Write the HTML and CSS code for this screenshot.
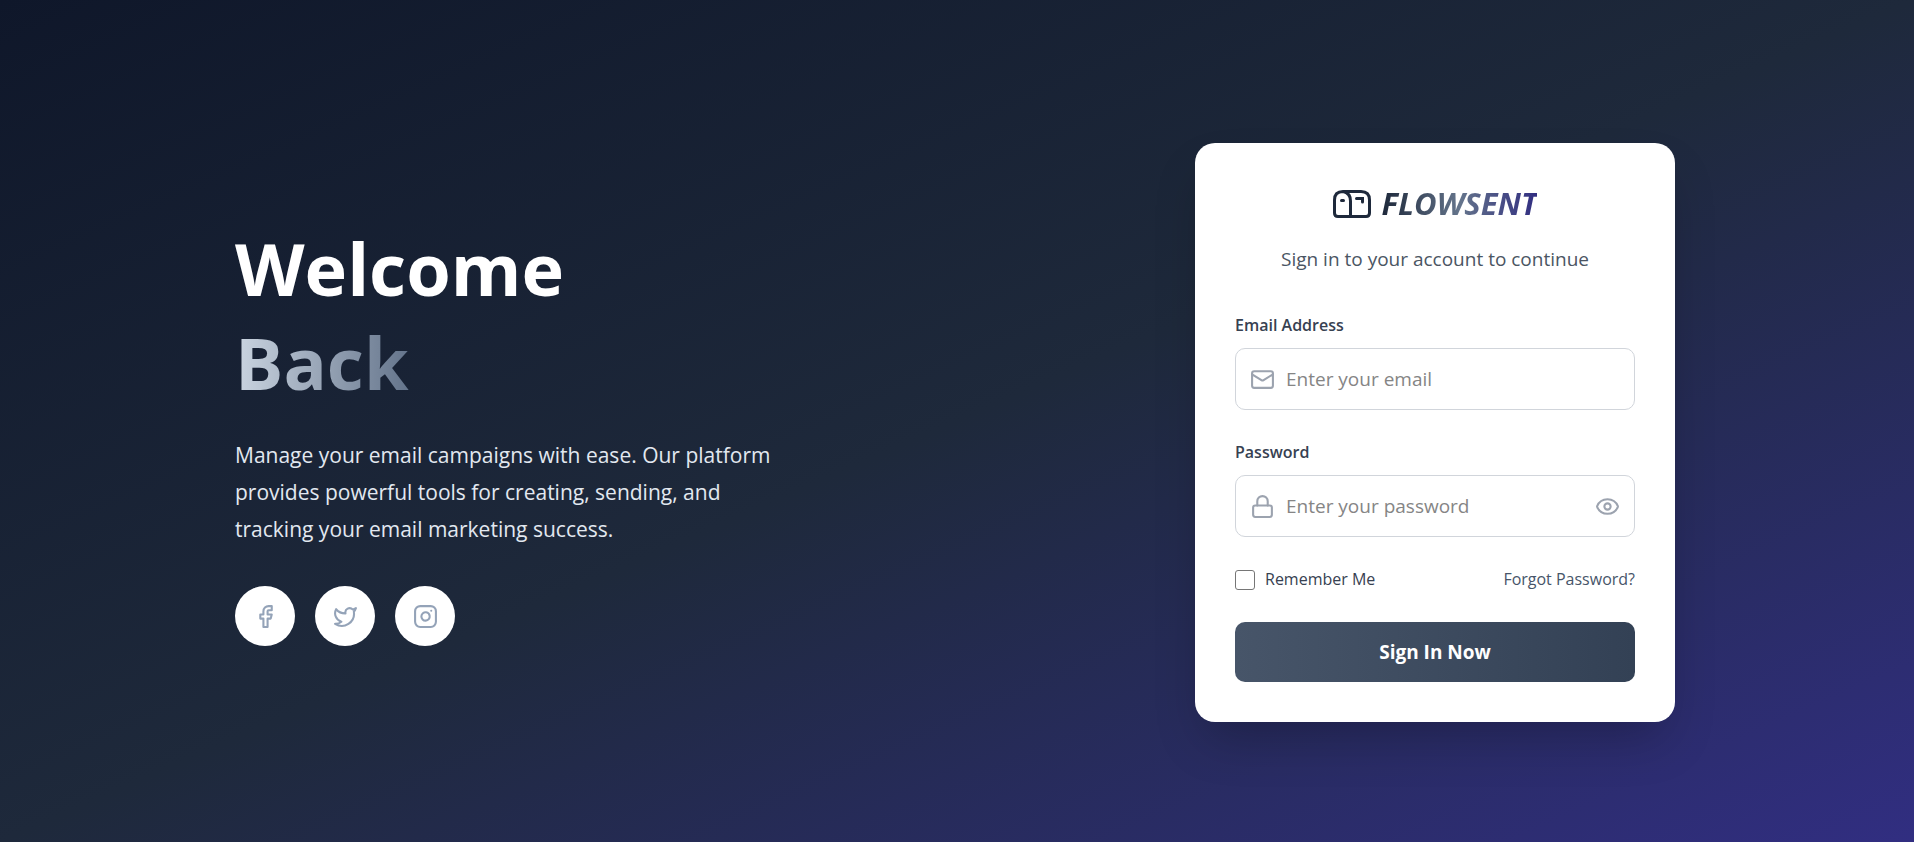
FILE: index.html
```html
<!DOCTYPE html>
<html lang="en">
<head>
<meta charset="utf-8">
<meta name="viewport" content="width=device-width, initial-scale=1">
<title>Flowsent – Sign In</title>
<link rel="stylesheet" href="styles.css">
</head>
<body>
<main class="page">
  <div class="container">
    <section class="intro">
      <h1 class="intro-title">Welcome<br><span class="intro-accent">Back</span></h1>
      <p class="intro-text">Manage your email campaigns with ease. Our platform provides powerful tools for creating, sending, and tracking your email marketing success.</p>
      <nav class="socials" aria-label="Social links">
        <a class="social" href="#" aria-label="Facebook"><svg class="icon" viewBox="0 0 24 24"><path d="M18 2h-3a5 5 0 0 0-5 5v3H7v4h3v8h4v-8h3l1-4h-4V7a1 1 0 0 1 1-1h3z"/></svg></a>
        <a class="social" href="#" aria-label="Twitter"><svg class="icon" viewBox="0 0 24 24"><path d="M22 4s-.7 2.100-2 3.400c1.600 10-9.400 17.300-18 11.600 2.200.1 4.400-.6 6-2C3 15.500.5 9.600 3 5c2.200 2.600 5.600 4.100 9 4-.9-4.200 4-6.600 7-3.800 1.100 0 3-1.200 3-1.200z"/></svg></a>
        <a class="social" href="#" aria-label="Instagram"><svg class="icon" viewBox="0 0 24 24"><rect x="2" y="2" width="20" height="20" rx="5"/><path d="M16 11.370A4 4 0 1 1 12.630 8 4 4 0 0 1 16 11.370zM17.500 6.500h.01"/></svg></a>
      </nav>
    </section>
    <section class="card">
      <header class="card-head">
        <div class="brand">
          <svg class="brand-mark" viewBox="0 0 38 28"><path d="M10 1.500H28Q36.500 1.500 36.500 10V23Q36.500 26.500 33 26.500H5Q1.500 26.500 1.500 23V10Q1.500 1.500 10 1.500Q17.500 3 17.500 11V26"/><path d="M8.500 10.500h2"/><path d="M23.500 8.500h6v3.500" stroke-linejoin="miter"/></svg>
          <span class="brand-name">FLOWSENT</span>
        </div>
        <p class="card-text">Sign in to your account to continue</p>
      </header>
      <form class="form">
        <div class="field">
          <label class="label" for="email">Email Address</label>
          <div class="control">
            <svg class="icon" viewBox="0 0 24 24"><rect x="2" y="4" width="20" height="16" rx="2"/><path d="m22 7-8.970 5.700a1.940 1.940 0 0 1-2.060 0L2 7"/></svg>
            <input class="input" id="email" type="email" placeholder="Enter your email">
          </div>
        </div>
        <div class="field">
          <label class="label" for="password">Password</label>
          <div class="control">
            <svg class="icon" viewBox="0 0 24 24"><rect x="3" y="11" width="18" height="11" rx="2"/><path d="M7 11V7a5 5 0 0 1 10 0v4"/></svg>
            <input class="input" id="password" type="password" placeholder="Enter your password">
            <button class="reveal" type="button" aria-label="Show password"><svg class="icon" viewBox="0 0 24 24"><path d="M2.060 12.350a1 1 0 0 1 0-.7 10.750 10.750 0 0 1 19.880 0 1 1 0 0 1 0 .7 10.750 10.750 0 0 1-19.880 0"/><circle cx="12" cy="12" r="3"/></svg></button>
          </div>
        </div>
        <div class="options">
          <label class="remember" for="remember"><input class="check" id="remember" type="checkbox">Remember Me</label>
          <a class="forgot" href="#">Forgot Password?</a>
        </div>
        <button class="submit" type="submit">Sign In Now</button>
      </form>
    </section>
  </div>
</main>
</body>
</html>
```

FILE: styles.css
```css
* { box-sizing: border-box; margin: 0; }

body {
  font-family: "Segoe UI", "Open Sans", "Noto Sans", sans-serif;
  color: #374151;
}

.page {
  min-height: 100vh;
  padding: 143px 52px 120px 48px;
  display: flex;
  justify-content: center;
  background: linear-gradient(to bottom right, #0f172a, #1e293b, #312e81);
}

.container {
  width: 100%;
  max-width: 1440px;
  display: flex;
  justify-content: space-between;
  align-items: center;
  gap: 48px;
}

.icon {
  width: 25px;
  height: 25px;
  flex: none;
  fill: none;
  stroke: #9ca3af;
  stroke-width: 2;
  stroke-linecap: round;
  stroke-linejoin: round;
}

.intro { max-width: 560px; }

.intro-title {
  padding-top: 2px;
  font-size: 72px;
  line-height: 94px;
  font-weight: 700;
  color: #fff;
}

.intro-accent {
  background: linear-gradient(to right, #cbd5e1, #64748b);
  background-clip: text;
  -webkit-background-clip: text;
  color: transparent;
}

.intro-text {
  margin: 28px 0 38px;
  font-size: 21px;
  line-height: 37px;
  color: #e2e8f0;
}

.socials { display: flex; gap: 20px; }

.social {
  width: 60px;
  height: 60px;
  display: flex;
  align-items: center;
  justify-content: center;
  border-radius: 50%;
  background: #fff;
}

.social .icon { stroke: #94a3b8; }

.card {
  width: 480px;
  padding: 40px;
  border-radius: 20px;
  background: #fff;
  box-shadow: 0 25px 50px -12px rgba(0, 0, 0, 0.25);
}

.card-head { text-align: center; }

.brand {
  display: flex;
  align-items: center;
  justify-content: center;
  gap: 11px;
  height: 41px;
}

.brand-mark {
  width: 38px;
  height: 28px;
  fill: none;
  stroke: #1e293b;
  stroke-width: 3;
  stroke-linecap: round;
  stroke-linejoin: round;
}

.brand-name {
  font-size: 31px;
  line-height: 41px;
  font-weight: 700;
  font-style: italic;
  background: linear-gradient(to right, #1e293b, #64748b, #312e81);
  background-clip: text;
  -webkit-background-clip: text;
  color: transparent;
}

.card-text {
  margin-top: 20px;
  font-size: 19px;
  line-height: 30px;
  color: #4b5563;
}

.form { margin-top: 39px; }

.field { margin-bottom: 30px; }

.label {
  display: block;
  margin-bottom: 10px;
  font-size: 16px;
  line-height: 25px;
  font-weight: 600;
}

.control {
  display: flex;
  align-items: center;
  gap: 11px;
  height: 62px;
  padding: 0 14px;
  border: 1px solid #d1d5db;
  border-radius: 10px;
}

.input {
  flex: 1;
  min-width: 0;
  padding: 0;
  border: 0;
  outline: 0;
  background: none;
  font: inherit;
  font-size: 19px;
}

.input::placeholder { color: #858585; }

.reveal {
  display: flex;
  padding: 0;
  border: 0;
  background: none;
  cursor: pointer;
}

.options {
  display: flex;
  align-items: center;
  justify-content: space-between;
  margin-bottom: 30px;
  font-size: 16px;
  line-height: 25px;
}

.remember { display: flex; align-items: center; gap: 10px; }

.check {
  appearance: none;
  width: 20px;
  height: 20px;
  margin: 0;
  border: 1px solid #767676;
  border-radius: 3px;
  background: #fff;
}

.check:checked { background: #475569; }

.forgot { color: #475569; text-decoration: none; }

.submit {
  display: block;
  width: 100%;
  height: 60px;
  border: 0;
  border-radius: 10px;
  background: linear-gradient(to right, #475569, #334155);
  color: #fff;
  font: inherit;
  font-size: 19px;
  font-weight: 700;
  cursor: pointer;
}
```
